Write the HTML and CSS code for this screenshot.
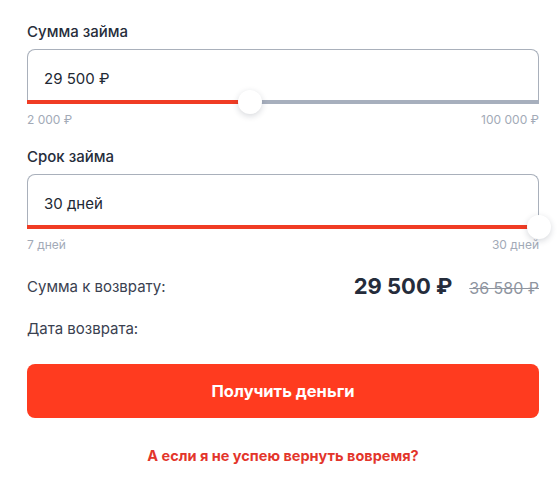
FILE: index.html
```html
<!DOCTYPE html>
<html lang="ru">
<head>
<meta charset="utf-8">
<link rel="stylesheet" href="styles.css">
</head>
<body>
<div class="calc">
  <div class="field">
    <div class="label">Сумма займа</div>
    <div class="box">
      <div class="value">29 500 ₽</div>
      <div class="track">
        <div class="fill" style="width: 43.5%"></div>
        <div class="thumb" style="left: 43.5%"></div>
      </div>
    </div>
    <div class="limits"><span>2 000 ₽</span><span>100 000 ₽</span></div>
  </div>
  <div class="field field-second">
    <div class="label">Срок займа</div>
    <div class="box">
      <div class="value">30 дней</div>
      <div class="track">
        <div class="fill" style="width: 100%"></div>
        <div class="thumb" style="left: 100%"></div>
      </div>
    </div>
    <div class="limits"><span>7 дней</span><span>30 дней</span></div>
  </div>
  <div class="row row-sum">
    <span class="row-label">Сумма к возврату:</span>
    <span class="amounts"><span class="amount">29 500 ₽</span><span class="old">36 580 ₽</span></span>
  </div>
  <div class="row row-date">
    <span class="row-label">Дата возврата:</span>
  </div>
  <button class="cta">Получить деньги</button>
  <a class="late" href="#">А если я не успею вернуть вовремя?</a>
</div>
</body>
</html>
```
FILE: styles.css
```css
* { box-sizing: border-box; }
html, body { margin: 0; padding: 0; background: #fff; }
body { font-family: Inter, "Noto Sans", sans-serif; color: #2b3242; }
.calc {
  width: 512px;
  margin-left: 27px;
  padding-top: 22px;
  display: flex;
  flex-direction: column;
}
.label {
  font-size: 15px;
  font-weight: 500;
  line-height: 20px;
  color: #262d3b;
  margin-bottom: 7px;
}
.field-second { margin-top: 20px; }
.box {
  border: 1px solid #a9b0bb;
  border-bottom: none;
  border-radius: 8px 8px 0 0;
  display: flex;
  flex-direction: column;
}
.value {
  height: 50px;
  padding: 20px 0 0 16px;
  font-size: 15px;
  line-height: 18px;
  color: #222833;
}
.track {
  position: relative;
  height: 4px;
  margin: 0 -1px;
  background: #a7afbd;
}
.fill { height: 4px; background: #f03c24; }
.thumb {
  position: absolute;
  top: 50%;
  width: 24px;
  height: 24px;
  margin: -12px 0 0 -12px;
  border-radius: 50%;
  background: #fff;
  box-shadow: 0 2px 6px rgba(30, 40, 60, 0.18);
}
.limits {
  display: flex;
  justify-content: space-between;
  font-size: 12px;
  line-height: 14px;
  color: #a2aab7;
  margin-top: 9px;
}
.row {
  display: flex;
  justify-content: space-between;
  align-items: center;
  height: 30px;
}
.row-sum { margin-top: 19px; }
.row-date { margin-top: 12px; }
.row-label { font-size: 15px; color: #3a4150; }
.amounts { display: flex; align-items: baseline; gap: 17px; }
.amount { font-size: 22px; font-weight: 700; color: #252c3b; }
.old { font-size: 16px; color: #8f959f; text-decoration: line-through; }
.cta {
  margin-top: 21px;
  height: 54px;
  border: none;
  border-radius: 8px;
  background: #ff3b1f;
  color: #fff;
  font-family: inherit;
  font-size: 16.5px;
  font-weight: 700;
  cursor: pointer;
}
.late {
  margin-top: 29px;
  text-align: center;
  font-size: 14.5px;
  font-weight: 700;
  color: #e3352b;
  text-decoration: none;
}
```
